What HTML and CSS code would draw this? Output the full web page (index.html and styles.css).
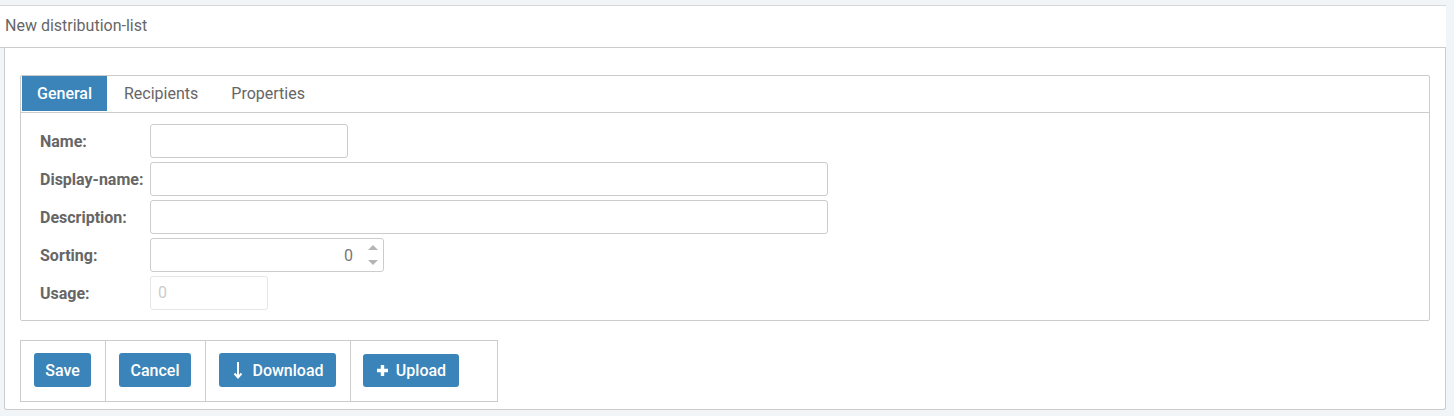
FILE: index.html
```html
<!DOCTYPE html>
<html>
<head>
<meta charset="utf-8">
<link rel="stylesheet" href="styles.css">
</head>
<body>
<div class="page">
  <div class="panel-head">New distribution-list</div>
  <div class="panel-body">
    <div class="tabbox">
      <div class="tabs">
        <div class="tab active">General</div>
        <div class="tab">Recipients</div>
        <div class="tab">Properties</div>
      </div>
      <div class="form">
        <div class="row"><label class="lbl">Name:</label><div class="inp w-name"></div></div>
        <div class="row"><label class="lbl">Display-name:</label><div class="inp w-wide"></div></div>
        <div class="row"><label class="lbl">Description:</label><div class="inp w-wide"></div></div>
        <div class="row"><label class="lbl">Sorting:</label>
          <div class="inp w-sort num"><span class="numval">0</span>
            <svg class="spin" width="12" height="26" viewBox="0 0 12 26"><path d="M1 8 L6 3 L11 8 Z" fill="#b5b5b5"/><path d="M1 18 L11 18 L6 23 Z" fill="#b5b5b5"/></svg>
          </div>
        </div>
        <div class="row"><label class="lbl">Usage:</label><div class="inp w-usage disabled">0</div></div>
      </div>
    </div>
    <div class="toolbar">
      <div class="cell c1"><button class="btn b-save">Save</button></div>
      <div class="cell c2"><button class="btn b-cancel">Cancel</button></div>
      <div class="cell c3"><button class="btn b-down"><svg width="10" height="18" viewBox="0 0 10 18"><path d="M5 1 V16 M1.5 12.5 L5 16.5 L8.5 12.5" stroke="#fff" stroke-width="2" fill="none"/></svg>Download</button></div>
      <div class="cell c4"><button class="btn b-up"><svg width="13" height="13" viewBox="0 0 13 13"><path d="M6.5 1 V12 M1 6.5 H12" stroke="#fff" stroke-width="3.4" fill="none"/></svg>Upload</button></div>
    </div>
  </div>
</div>
</body>
</html>
```

FILE: styles.css
```css
html, body {
  margin: 0;
  padding: 0;
  background: #f1f5f8;
  font-family: Roboto, "Liberation Sans", sans-serif;
  color: #666;
}
.page {
  padding-top: 5px;
  width: 1446px;
}
.panel-head {
  background: #fff;
  border-top: 1px solid #d6d9dc;
  border-bottom: 1px solid #ccc;
  height: 41px;
  line-height: 40px;
  padding-left: 5px;
  font-size: 16px;
  color: #666;
}
.panel-body {
  margin-left: 4px;
  background: #fff;
  border: 1px solid #ccc;
  border-top: none;
  border-radius: 0 0 3px 3px;
  padding: 27px 15px 7px 15px;
}
.tabbox {
  border: 1px solid #ccc;
  border-radius: 2px;
  height: 246px;
  box-sizing: border-box;
}
.tabs {
  display: flex;
  height: 37px;
  border-bottom: 1px solid #ccc;
  box-sizing: border-box;
  padding: 0 1px;
}
.tab {
  height: 35px;
  line-height: 35px;
  font-size: 16px;
  padding: 0 16px 0 17px;
  color: #666;
}
.tab.active {
  background: #3a84b9;
  color: #fff;
  font-weight: 500;
  width: 85px;
  box-sizing: border-box;
  padding: 0 0 0 15px;
}
.form {
  padding: 11px 19px 0 19px;
  display: flex;
  flex-direction: column;
  gap: 4px;
}
.row {
  display: flex;
  align-items: center;
  height: 34px;
}
.lbl {
  width: 110px;
  font-size: 16px;
  font-weight: bold;
  color: #666;
}
.inp {
  height: 34px;
  box-sizing: border-box;
  border: 1px solid #ccc;
  border-radius: 3px;
  background: #fff;
  font-size: 16px;
}
.w-name { width: 198px; }
.w-wide { width: 678px; }
.w-sort { width: 234px; }
.w-usage { width: 118px; }
.num {
  display: flex;
  align-items: center;
  justify-content: flex-end;
  padding-right: 4px;
}
.numval {
  margin-right: 14px;
  color: #777;
}
.spin { display: block; }
.disabled {
  border-color: #e6e6e6;
  color: #ccc;
  line-height: 32px;
  padding-left: 7px;
}
.toolbar {
  display: flex;
  margin-top: 19px;
  border: 1px solid #ccc;
  width: 478px;
  height: 62px;
  box-sizing: border-box;
}
.cell {
  box-sizing: border-box;
  padding: 12px 0 0 13px;
  border-right: 1px solid #ccc;
}
.c1 { width: 85px; }
.c2 { width: 100px; }
.c3 { width: 145px; }
.c4 { width: 146px; border-right: none; padding-left: 12px; padding-top: 13px; }
.btn {
  display: flex;
  align-items: center;
  justify-content: center;
  gap: 7px;
  height: 34px;
  border: none;
  border-radius: 3px;
  background: #3a84b9;
  color: #fff;
  font-family: Roboto, "Liberation Sans", sans-serif;
  font-size: 16px;
  font-weight: 500;
  padding: 0;
}
.b-down { gap: 9px; padding-left: 2px; }
.c4 .btn { height: 33px; }
.b-save { width: 57px; }
.b-cancel { width: 72px; }
.b-down { width: 117px; }
.b-up { width: 96px; }
```
